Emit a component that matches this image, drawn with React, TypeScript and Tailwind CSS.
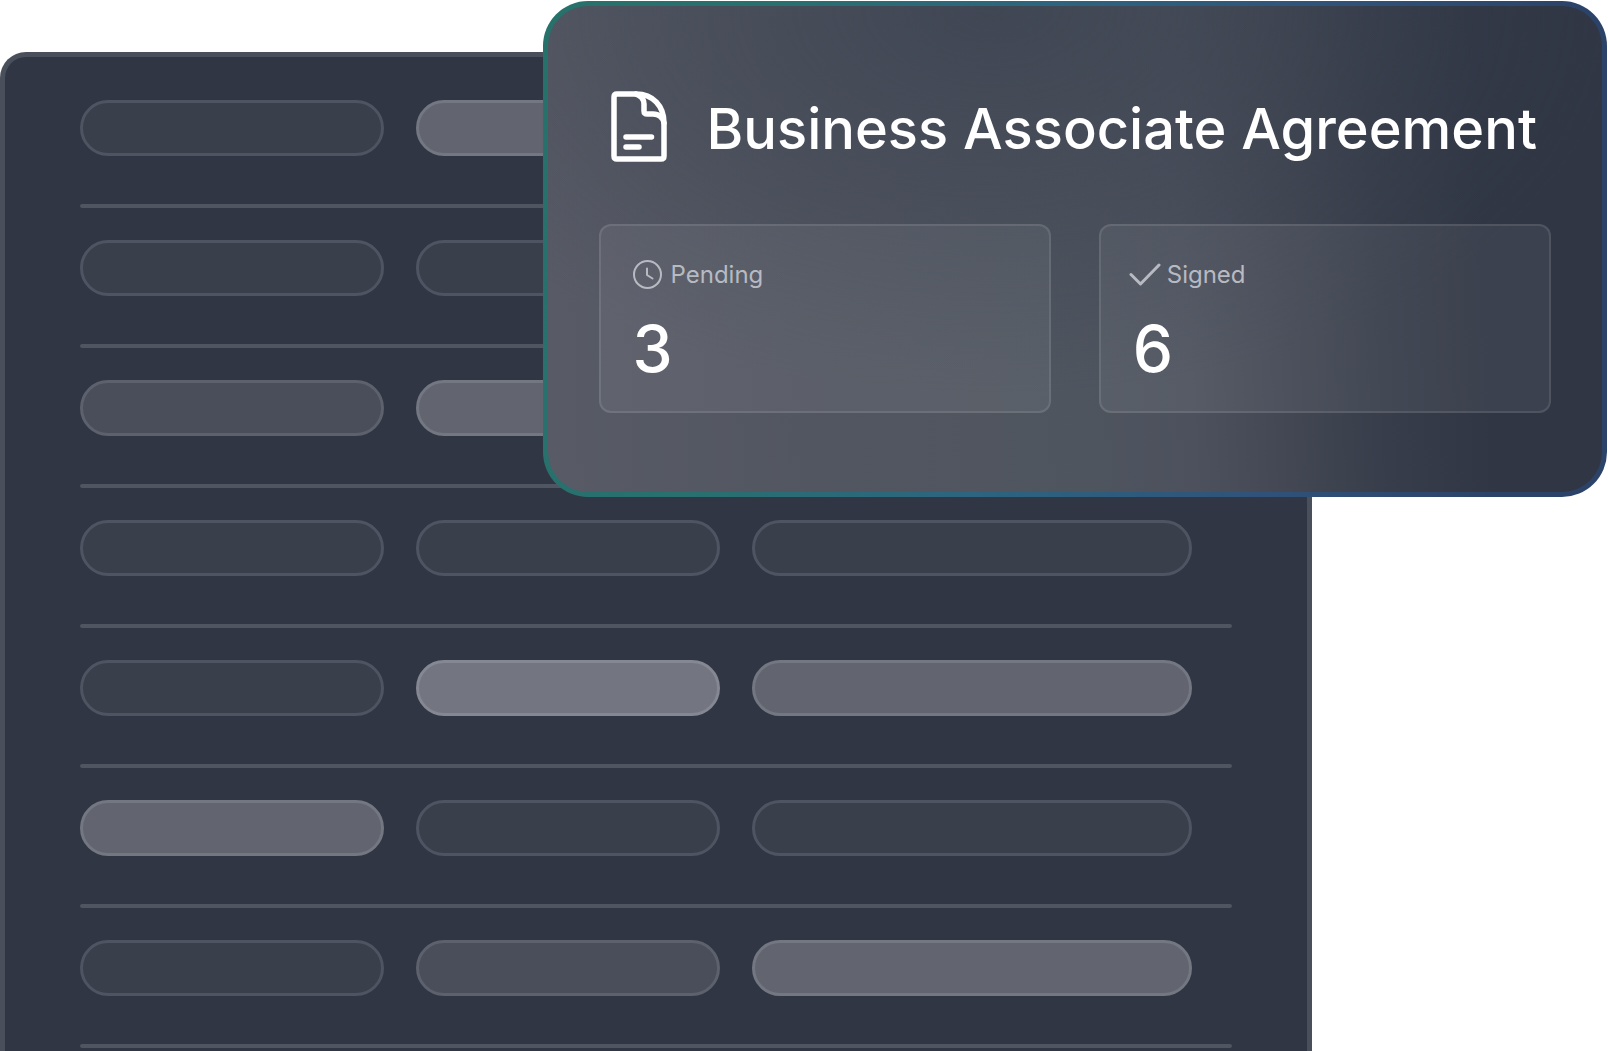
type Tone = 'dim' | 'soft' | 'mid' | 'bright';

const tones: Record<Tone, string> = {
  dim: 'bg-[#3a3f4c] border-[#4e5461]',
  soft: 'bg-[#494e5a] border-[#5c616d]',
  mid: 'bg-[#62656f] border-[#737782]',
  bright: 'bg-[#737680] border-[#858893]',
};

const rows: Tone[][] = [
  ['dim', 'mid', 'dim'],
  ['dim', 'dim', 'dim'],
  ['soft', 'mid', 'dim'],
  ['dim', 'dim', 'dim'],
  ['dim', 'bright', 'mid'],
  ['mid', 'dim', 'dim'],
  ['dim', 'soft', 'mid'],
];

function DocumentIcon() {
  return (
    <svg className="w-14 h-[72px] shrink-0" viewBox="0 0 56 72" fill="none" stroke="white" strokeWidth="5.5" strokeLinecap="round" strokeLinejoin="round" aria-hidden="true">
      <path d="M6 3H25C42 3 53 15 53 32V65Q53 68 50 68H6Q3 68 3 65V6Q3 3 6 3Z" />
      <path d="M25 3C30 5 33 8 33 13V20Q33 23 36.500 23H42C48 23 52 27 53 32" />
      <path d="M15 46H40.500M15 56H28" />
    </svg>
  );
}

function ClockIcon() {
  return (
    <svg className="w-[30px] h-[30px]" viewBox="0 0 30 30" fill="none" stroke="currentColor" strokeWidth="2" strokeLinecap="round" strokeLinejoin="round" aria-hidden="true">
      <circle cx="14.5" cy="14.5" r="13.5" />
      <path d="M14 8.500V15L19.500 18.500" />
    </svg>
  );
}

function CheckIcon() {
  return (
    <svg className="-ml-1 w-8 h-[30px]" viewBox="0 0 32 30" fill="none" stroke="currentColor" strokeWidth="3" strokeLinecap="round" strokeLinejoin="round" aria-hidden="true">
      <path d="M2 14.500L11.500 24L30 5" />
    </svg>
  );
}

export default function App() {
  return (
    <main className="relative flex flex-col min-h-screen overflow-hidden bg-white pt-[52px] font-['Inter',sans-serif]">

      {/* Placeholder table */}
      <section className="flex-1 w-[81.6%] rounded-t-[26px] border-[5px] border-b-0 border-[#49505c] bg-[#303644] px-[75px] pt-[43px]">
        {rows.map((row, i) => (
          <div key={i} className="mb-8">
            <div className="grid grid-cols-[304fr_304fr_440fr] gap-8 pr-10">
              {row.map((tone, j) => (
                <div key={j} className={`h-14 rounded-full border-[3px] ${tones[tone]}`} />
              ))}
            </div>
            <div className="mt-12 h-1 rounded-full bg-[#4f5561]" />
          </div>
        ))}
      </section>

      {/* Agreement card, floats over the table */}
      <article className="absolute top-px right-px w-[66.2%] rounded-[45px] bg-[linear-gradient(100deg,#27716b_0%,#29706f_20%,#2d6480_45%,#30527a_70%,#2c4369_90%)] p-[5px]">
        <div className="rounded-[40px] bg-[radial-gradient(ellipse_60%_80%_at_42%_0%,#3b4250c0_0%,#3b425000_100%),linear-gradient(87deg,#585b66_0%,#525661_25%,#4f555f_50%,#4c515d_60%,#424753_69%,#373d4a_78%,#303644_88%)] pt-[81px] px-[51px] pb-[79px]">

          <header className="flex items-center gap-10 pl-3 h-20">
            <DocumentIcon />
            <h1 className="pt-1 text-[56px] leading-[80px] font-medium text-white whitespace-nowrap">Business Associate Agreement</h1>
          </header>

          <div className="mt-[57px] grid grid-cols-2 gap-12">
            <section className="rounded-xl border-2 border-white/10 bg-white/6 pt-[33px] px-8 pb-[22px]">
              <h2 className="flex items-center gap-2 text-2xl leading-8 text-[#b8bac2]">
                <ClockIcon />
                Pending
              </h2>
              <p className="mt-[18px] text-[64px] leading-[80px] font-medium text-white">3</p>
            </section>
            <section className="rounded-xl border-2 border-white/10 bg-white/6 pt-[33px] px-8 pb-[22px]">
              <h2 className="flex items-center gap-1.5 text-2xl leading-8 text-[#b8bac2]">
                <CheckIcon />
                Signed
              </h2>
              <p className="mt-[18px] text-[64px] leading-[80px] font-medium text-white">6</p>
            </section>
          </div>

        </div>
      </article>
    </main>
  );
}
